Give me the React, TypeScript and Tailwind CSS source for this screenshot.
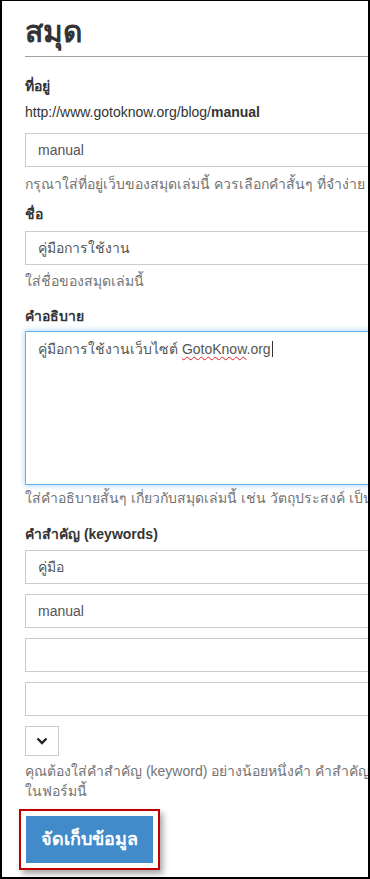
const font = "font-['Liberation_Sans',Tahoma,'Noto_Sans',sans-serif]";

function Field({ value }: { value?: string }) {
  return (
    <div className="h-[34px] w-[400px] border border-[#cccccc] bg-white px-[12px] text-[14px] leading-[32px] text-[#555555]">
      {value}
    </div>
  );
}

export default function App() {
  return (
    <div className={`${font} h-[879px] w-[370px] overflow-hidden border-2 border-t border-black bg-white text-[#333333]`}>
      <div className="w-[420px] pl-[23px] pt-[13px]">
        <h1 className="h-[36px] text-[30px] font-bold leading-[36px] text-[#333333]">สมุด</h1>
        <hr className="mt-[6px] border-t border-[#a0a0a0]" />

        <div className="mt-[19px] text-[14px] font-bold leading-[20px]">ที่อยู่</div>
        <div className="mt-[6px] text-[14px] leading-[20px]">
          http://www.gotoknow.org/blog/<b>manual</b>
        </div>
        <div className="mt-[11px]">
          <Field value="manual" />
        </div>
        <p className="mt-[7px] whitespace-nowrap text-[14px] leading-[20px] text-[#737373]">
          กรุณาใส่ที่อยู่เว็บของสมุดเล่มนี้ ควรเลือกคำสั้นๆ ที่จำง่าย เป็น
        </p>

        <div className="mt-[10px] text-[14px] font-bold leading-[20px]">ชื่อ</div>
        <div className="mt-[7px]">
          <Field value="คู่มือการใช้งาน" />
        </div>
        <p className="mt-[6px] text-[14px] leading-[20px] text-[#737373]">ใส่ชื่อของสมุดเล่มนี้</p>

        <div className="mt-[15px] text-[14px] font-bold leading-[20px]">คำอธิบาย</div>
        <div className="mt-[5px] h-[154px] w-[400px] border border-[#66afe9] bg-white px-[12px] py-[6px] text-[14px] leading-[20px] text-[#555555] shadow-[0_0_6px_rgba(102,175,233,0.6)]">
          คู่มือการใช้งานเว็บไซต์{" "}
          <span className="underline decoration-[#e02020] decoration-wavy decoration-1 underline-offset-2">GotoKnow</span>
          .org<span className="ml-px inline-block h-[16px] w-px translate-y-[3px] bg-[#333]" />
        </div>
        <p className="mt-[3px] whitespace-nowrap text-[14px] leading-[20px] text-[#737373]">
          ใส่คำอธิบายสั้นๆ เกี่ยวกับสมุดเล่มนี้ เช่น วัตถุประสงค์ เป็นต้น
        </p>

        <div className="mt-[16px] text-[14px] font-bold leading-[20px]">คำสำคัญ (keywords)</div>
        <div className="mt-[6px] flex flex-col gap-[10px]">
          <Field value="คู่มือ" />
          <Field value="manual" />
          <Field />
          <Field />
        </div>

        <button className="mt-[10px] flex h-[30px] w-[34px] items-center justify-center border border-[#cccccc] bg-white">
          <svg width="12" height="8" viewBox="0 0 12 8">
            <path d="M1.5 1.5 L6 6 L10.5 1.5" fill="none" stroke="#222" strokeWidth="2.4" />
          </svg>
        </button>
        <p className="mt-[5px] whitespace-nowrap text-[14px] leading-[20px] text-[#737373]">
          คุณต้องใส่คำสำคัญ (keyword) อย่างน้อยหนึ่งคำ คำสำคัญคือ
          <br />
          ในฟอร์มนี้
        </p>

        <div className="-ml-[6px] mt-[8px] inline-block border-2 border-[#c00000] p-[5px] shadow-[3px_4px_6px_rgba(0,0,0,0.35)]">
          <button className="h-[47px] w-[127px] bg-[#428bca] text-[18px] font-bold text-white">จัดเก็บข้อมูล</button>
        </div>
      </div>
    </div>
  );
}
